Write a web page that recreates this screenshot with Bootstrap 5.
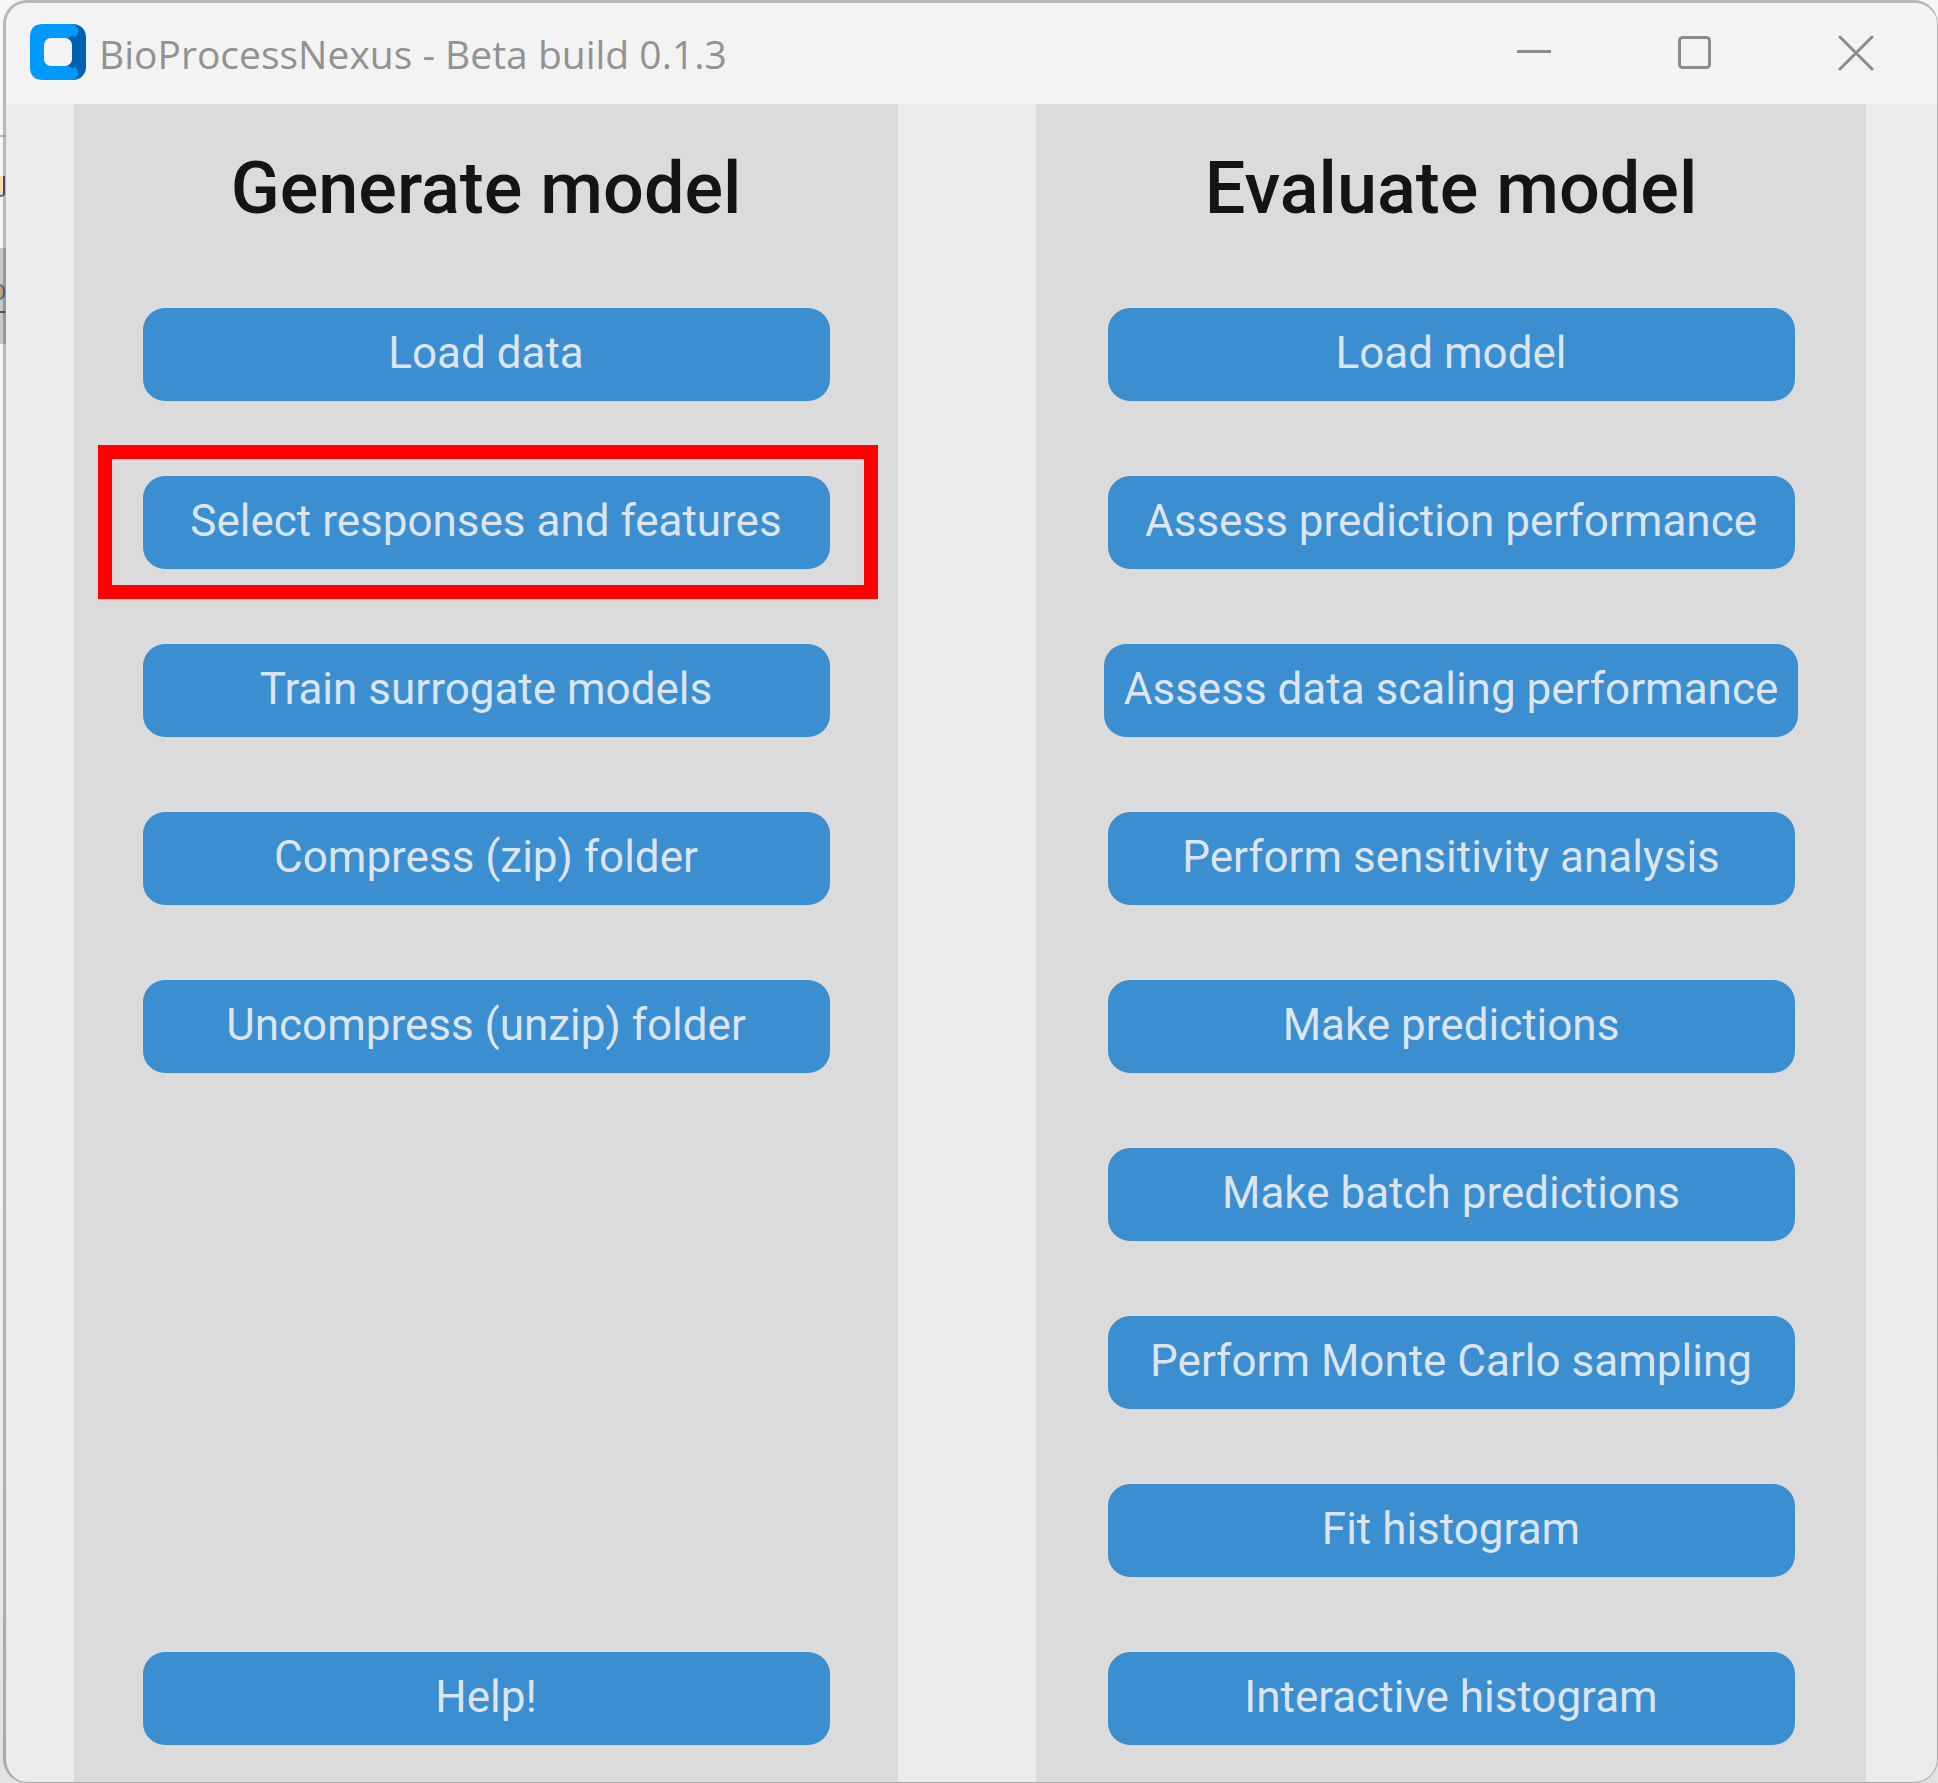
<!DOCTYPE html>
<html lang="en">
<head>
<meta charset="utf-8">
<meta name="viewport" content="width=device-width, initial-scale=1">
<title>BioProcessNexus - Beta build 0.1.3</title>
<link href="https://cdn.jsdelivr.net/npm/bootstrap@5.3.0/dist/css/bootstrap.min.css" rel="stylesheet">
<style>
  body { font-family: Roboto, "Liberation Sans", sans-serif; }
  .desktop { padding-left: 3px; overflow: hidden; background: linear-gradient(#f6f6f6 60%, #e2e2e2); }
  .behind { left: 0; top: 0; width: 6px; height: 400px; }
  .app-window { background: #ebebeb padding-box; border: 3px solid rgba(0, 0, 0, .25); border-right-width: 1px; border-bottom-width: 1px; border-radius: 24px; overflow: hidden; }
  .titlebar { height: 101px; background: #f3f3f3; padding-left: 24px; padding-right: 62px; }
  .app-logo { width: 56px; height: 56px; margin-right: 13px; }
  .app-title { font-family: "Open Sans", "Noto Sans", sans-serif; font-size: 39px; line-height: 56px; color: #929292; }
  .win-controls { gap: 123px; }
  .win-btn { width: 38px; height: 38px; color: #8c8c8c; }
  .panels { gap: 138px; padding-left: 68px; padding-right: 71px; }
  .panel { flex: 824 1 0; background: #dbdbdb; gap: 75px; padding-top: 45px; padding-bottom: 37px; min-width: 0; }
  .panel-wide { flex-grow: 830; }
  .panel-title { font-size: 72px; line-height: 80px; font-weight: 500; color: #141414; }
  .action { --bs-btn-bg: #3b8ed0; --bs-btn-color: #dce4ee; --bs-btn-border-width: 0; --bs-btn-hover-bg: #36719f; --bs-btn-hover-color: #dce4ee; --bs-btn-active-bg: #36719f; --bs-btn-border-radius: 22px;
    min-width: 687px; height: 93px; font-size: 44px; line-height: 56px; padding: 0 20px 4px; }
  .marked { position: relative; }
  .marked::after { content: ""; position: absolute; inset: -31px -48px -30px -45px; border: 14px solid #f00; pointer-events: none; }
</style>
<script src="https://cdn.jsdelivr.net/npm/bootstrap@5.3.0/dist/js/bootstrap.bundle.min.js"></script>
</head>
<body>
<div class="desktop position-relative min-vh-100 d-flex">
  <svg class="behind position-absolute" viewBox="0 0 6 400" aria-hidden="true">
    <rect y="135" width="6" height="2" fill="#c4c4c4"/>
    <rect y="176" width="3" height="18" fill="#fbdcae"/>
    <path d="M4 176v18q-1 2-4 2" fill="none" stroke="#6a5a9a" stroke-width="2"/>
    <rect y="248" width="6" height="96" fill="#c8c8c8"/>
    <path d="M0 285q4 1 4 7t-4 7" fill="#c9a070" stroke="#4a78a8" stroke-width="2"/>
    <rect y="311" width="5" height="2" fill="#555"/>
  </svg>
  <main class="app-window position-relative flex-grow-1 d-flex flex-column">
    <header class="titlebar d-flex align-items-center">
      <svg class="app-logo mb-1" viewBox="0 0 56 56" aria-hidden="true">
        <rect x="14" width="42" height="56" rx="13" fill="#0061b0"/>
        <path d="M13 0H41a7 7 0 0 1 5 12q-2 3-6 3v26q4 0 6 3a7 7 0 0 1-5 12H13Q0 56 0 43V13Q0 0 13 0Z" fill="#0099ff"/>
        <path d="M38 14l6-3v34l-6-3z" fill="#0061b0"/>
        <rect x="14" y="14" width="28" height="28" rx="7" fill="#f3f3f3"/>
      </svg>
      <span class="app-title me-auto">BioProcessNexus - Beta build 0.1.3</span>
      <div class="win-controls d-flex mb-1">
        <button type="button" class="btn p-0 border-0 win-btn d-flex" aria-label="Minimize"><svg width="38" height="38" viewBox="0 0 38 38" fill="none" stroke="currentColor" stroke-width="3"><path d="M2 18.5H36"/></svg></button>
        <button type="button" class="btn p-0 border-0 win-btn d-flex" aria-label="Maximize"><svg width="38" height="38" viewBox="0 0 38 38" fill="none" stroke="currentColor" stroke-width="3"><rect x="3.5" y="4.5" width="30" height="30" rx="3"/></svg></button>
        <button type="button" class="btn p-0 border-0 win-btn d-flex" aria-label="Close"><svg width="38" height="38" viewBox="0 0 38 38" fill="none" stroke="currentColor" stroke-width="3" stroke-linecap="round"><path d="M3 4L35 36M35 4L3 36"/></svg></button>
      </div>
    </header>
    <div class="panels d-flex flex-grow-1">
      <section class="panel d-flex flex-column align-items-center">
        <h1 class="panel-title mb-1">Generate model</h1>
        <button type="button" class="btn action">Load data</button>
        <button type="button" class="btn action marked">Select responses and features</button>
        <button type="button" class="btn action">Train surrogate models</button>
        <button type="button" class="btn action">Compress (zip) folder</button>
        <button type="button" class="btn action">Uncompress (unzip) folder</button>
        <button type="button" class="btn action mt-auto">Help!</button>
      </section>
      <section class="panel panel-wide d-flex flex-column align-items-center">
        <h1 class="panel-title mb-1">Evaluate model</h1>
        <button type="button" class="btn action">Load model</button>
        <button type="button" class="btn action">Assess prediction performance</button>
        <button type="button" class="btn action">Assess data scaling performance</button>
        <button type="button" class="btn action">Perform sensitivity analysis</button>
        <button type="button" class="btn action">Make predictions</button>
        <button type="button" class="btn action">Make batch predictions</button>
        <button type="button" class="btn action">Perform Monte Carlo sampling</button>
        <button type="button" class="btn action">Fit histogram</button>
        <button type="button" class="btn action">Interactive histogram</button>
      </section>
    </div>
  </main>
</div>
</body>
</html>
